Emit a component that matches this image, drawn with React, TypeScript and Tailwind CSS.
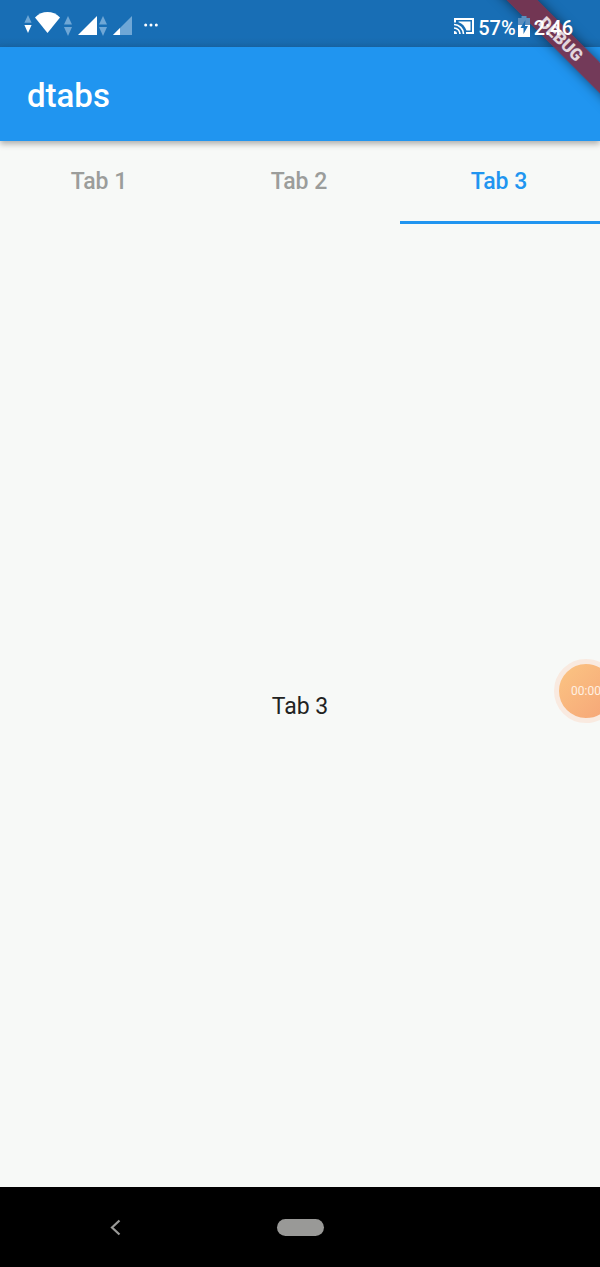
import { useState } from "react";

const tabs = ["Tab 1", "Tab 2", "Tab 3"];

function UpDown({ className, down }: { className: string; down: string }) {
  return (
    <svg className={className} viewBox="0 0 8 20" aria-hidden="true">
      <path d="M4 0L8 8.500H0z" fill="#6fa7d6" />
      <path d="M4 20L0 11h8z" fill={down} />
    </svg>
  );
}

function StatusBar() {
  return (
    <div className="flex h-[47px] items-center justify-between bg-linear-to-b from-[#186eb5] from-80% to-[#1867a8] pt-[5px] pr-[27px] pl-6 text-white">
      <div className="flex h-6 items-center">
        <UpDown className="mb-1 h-[18px] w-2" down="#ffffff" />
        <svg className="mb-2 ml-[3px] h-[21px] w-[25px]" viewBox="0 0 25 21" aria-hidden="true">
          <path d="M0 5.500C7-1.800 18-1.800 25 5.500L12.500 21z" fill="#fff" />
        </svg>
        <UpDown className="ml-1 h-5 w-2" down="#6fa7d6" />
        <svg className="mb-0.5 ml-1.5 h-[19px] w-[19px]" viewBox="0 0 19 19" aria-hidden="true">
          <path d="M19 0v19H0z" fill="#fff" />
        </svg>
        <UpDown className="ml-0.5 h-5 w-2" down="#6fa7d6" />
        <svg className="mb-0.5 ml-1.5 h-[19px] w-[19px]" viewBox="0 0 19 19" aria-hidden="true">
          <path d="M19 0v19H0z" fill="#6fa7d6" />
          <path d="M7 12v7H0z" fill="#fff" />
        </svg>
        <svg className="mb-0.5 ml-3 h-1 w-[14px]" viewBox="0 0 14 4" aria-hidden="true">
          <circle cx="1.700" cy="2" r="1.500" fill="#fff" />
          <circle cx="7" cy="2" r="1.500" fill="#fff" />
          <circle cx="12.300" cy="2" r="1.500" fill="#fff" />
        </svg>
      </div>
      <div className="relative z-10 flex items-center text-xl leading-6 font-medium">
        <svg className="mr-1 h-4 w-5" viewBox="0 0 20 16" fill="none" aria-hidden="true">
          <path d="M1 4.500V1h18v14h-7" stroke="#fff" strokeWidth="2" />
          <path d="M4.500 3.500h12v9H12.500C11 8.500 8.500 5.500 4.500 4.300z" fill="#fff" />
          <path d="M0 6.500a9.500 9.500 0 0 1 9.500 9.500M0 10a6 6 0 0 1 6 6" stroke="#fff" strokeWidth="1.700" />
          <path d="M0 13a3 3 0 0 1 3 3H0z" fill="#fff" />
        </svg>
        <span className="pt-1">57%</span>
        <svg className="ml-0.5 h-[21px] w-3" viewBox="0 0 12 21" aria-hidden="true">
          <path d="M3.500 0h5v2H12v8H0V2h3.500z" fill="#5b8fbf" />
          <path d="M0 9h12v12H0z" fill="#fff" />
          <path d="M7.500 4L2.500 12h3v6l4.500-8H7z" fill="#186eb5" />
        </svg>
        <span className="ml-1 pt-1">2:46</span>
      </div>
    </div>
  );
}

export default function App() {
  const [active, setActive] = useState(2);
  return (
    <div className="relative flex min-h-screen flex-col overflow-hidden bg-[#f7f9f7] font-[Roboto,sans-serif]">
      <StatusBar />
      <header className="flex h-[94px] items-center bg-[#2095f0] px-[27px] pt-1 shadow-[0_3px_6px_rgba(0,0,0,0.3)]">
        <h1 className="text-[33px] leading-10 font-medium text-white">dtabs</h1>
      </header>
      <div role="tablist" className="grid grid-cols-3">
        {tabs.map((tab, i) => (
          <button
            key={tab}
            id={`tab-${i}`}
            type="button"
            role="tab"
            aria-selected={i === active}
            aria-controls="panel"
            onClick={() => setActive(i)}
            className={`h-[83px] border-b-3 pt-0.5 pr-0.5 text-[23px] leading-7 font-medium ${
              i === active ? "border-[#2095f0] text-[#2095f0]" : "border-transparent text-[#9b9d9b]"
            }`}
          >
            {tab}
          </button>
        ))}
      </div>
      <main
        id="panel"
        role="tabpanel"
        aria-labelledby={`tab-${active}`}
        className="flex flex-1 items-center justify-center pt-0.5 text-[23px] leading-7 text-[#222322]"
      >
        {tabs[active]}
      </main>
      <nav className="grid h-20 grid-cols-[231px_138px_1fr] items-center justify-items-center bg-black">
        <button type="button" aria-label="Back" className="p-2">
          <svg className="h-[17px] w-[11px]" viewBox="0 0 11 17" fill="none" aria-hidden="true">
            <path d="M9.500 1.500L2 8.500l7.500 7" stroke="#9a9a98" strokeWidth="2.200" />
          </svg>
        </button>
        <button type="button" aria-label="Home" className="h-[17px] w-[47px] rounded-full bg-[#999997]" />
      </nav>
      <div className="pointer-events-none absolute top-[28px] -right-[61px] flex h-[22px] w-[200px] rotate-45 items-center justify-center bg-[#7c3048]/90 text-[17px] leading-5 font-black text-white/80 shadow-[0_0_12px_rgba(0,0,0,0.5)]">
        DEBUG
      </div>
      <button
        type="button"
        className="absolute top-[659px] -right-[18px] flex size-16 items-center justify-center rounded-full border-5 border-[#f9eae0] bg-linear-to-br from-[#fbc583] to-[#f5a477] text-[12px] leading-4 text-[#fff0e2]"
      >
        00:00
      </button>
    </div>
  );
}
